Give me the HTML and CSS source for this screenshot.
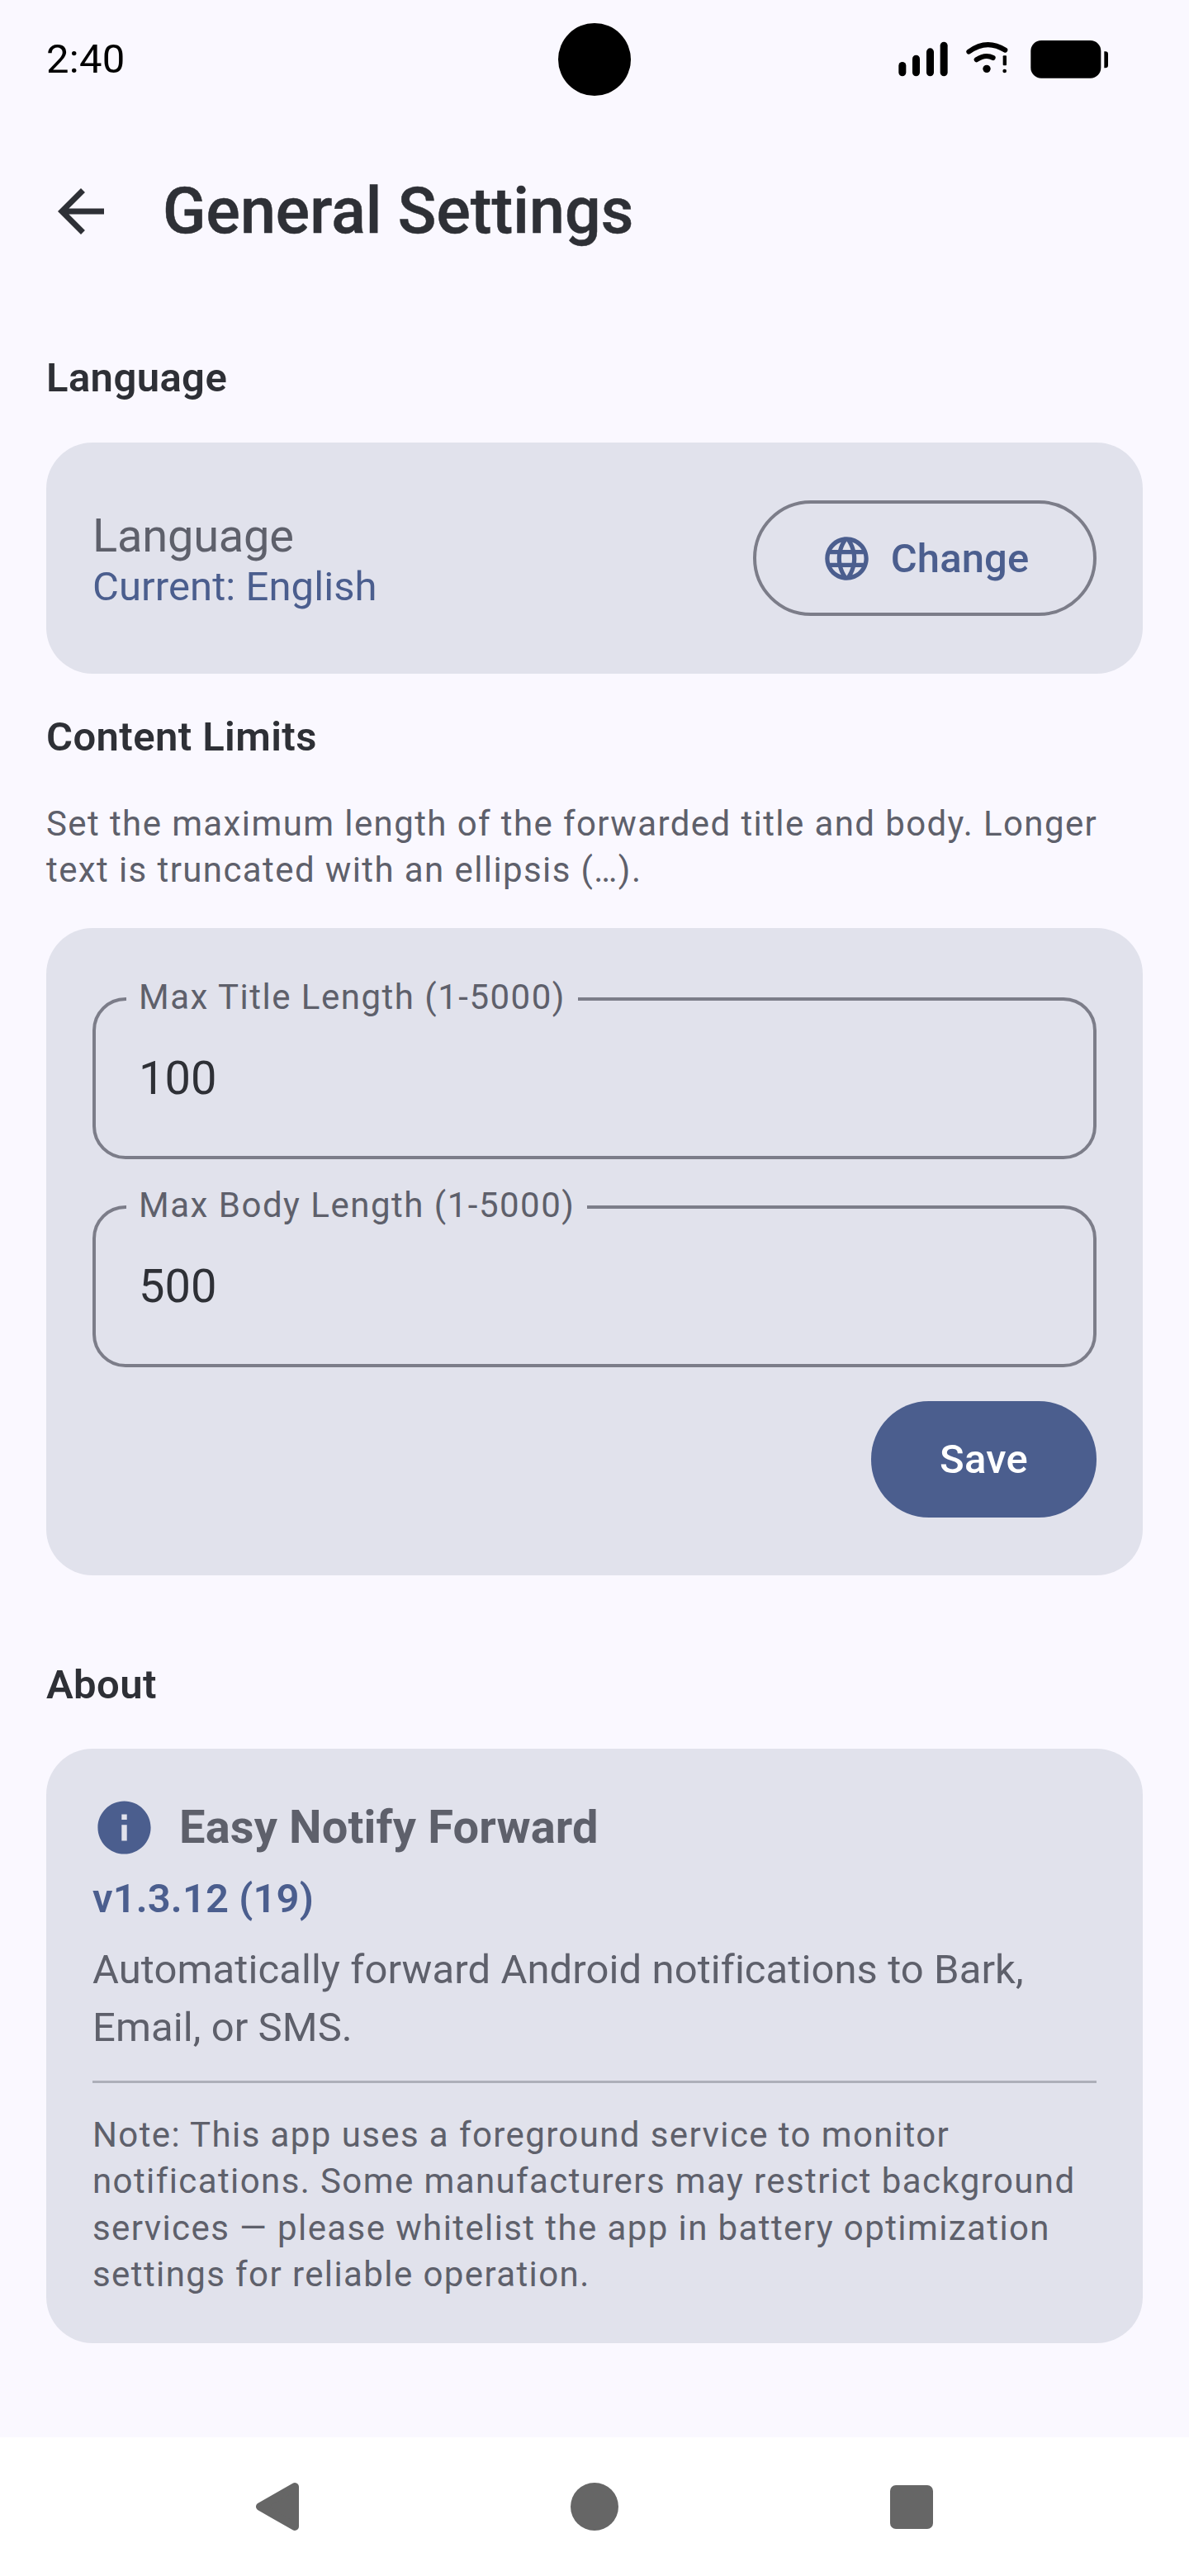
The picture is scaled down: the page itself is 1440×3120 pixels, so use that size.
FILE: index.html
```html
<!DOCTYPE html>
<html lang="en">
<head>
<meta charset="utf-8">
<title>General Settings</title>
<link rel="stylesheet" href="styles.css">
</head>
<body>
<div class="app">
  <div class="status-bar">
    <span class="time">2:40</span>
    <span class="camera"></span>
    <svg class="status-icons" viewBox="0 0 900 240" width="300" height="80">
      <rect x="85" y="135" width="27" height="52" rx="13.5"/>
      <rect x="135" y="110" width="27" height="77" rx="13.5"/>
      <rect x="186" y="85" width="27" height="102" rx="13.5"/>
      <rect x="236" y="62" width="27" height="125" rx="13.5"/>
      <path d="M340 98 Q405 50 472 92" fill="none" stroke="#000" stroke-width="18" stroke-linecap="round"/>
      <path d="M368 127 Q400 105 428 120" fill="none" stroke="#000" stroke-width="18" stroke-linecap="round"/>
      <circle cx="405" cy="160" r="14"/>
      <rect x="464" y="112" width="13" height="36" rx="3"/>
      <circle cx="470" cy="168" r="7"/>
      <rect x="565" y="57" width="255" height="137" rx="38"/>
      <path d="M832 97h4a10 10 0 0 1 10 10v40a10 10 0 0 1-10 10h-4z"/>
    </svg>
  </div>

  <header class="top-bar">
    <svg class="back" viewBox="0 0 24 24" width="84" height="84"><path d="M20 11H7.83l5.59-5.59L12 4l-8 8 8 8 1.41-1.41L7.83 13H20v-2z"/></svg>
    <h1 class="page-title">General Settings</h1>
  </header>

  <main class="content">
    <h2 class="section-title">Language</h2>
    <section class="card card-language">
      <div class="lang-text">
        <div class="lang-label">Language</div>
        <div class="lang-current">Current: English</div>
      </div>
      <button class="btn-outline" type="button">
        <svg viewBox="0 0 24 24" width="63" height="63"><path d="M11.99 2C6.47 2 2 6.48 2 12s4.47 10 9.99 10C17.52 22 22 17.52 22 12S17.52 2 11.99 2zm6.93 6h-2.95c-.32-1.25-.78-2.45-1.38-3.56 1.84.63 3.37 1.91 4.33 3.56zM12 4.04c.83 1.2 1.48 2.53 1.91 3.96h-3.82c.43-1.43 1.08-2.76 1.91-3.96zM4.26 14C4.1 13.36 4 12.69 4 12s.1-1.36.26-2h3.38c-.08.66-.14 1.32-.14 2 0 .68.06 1.34.14 2H4.26zm.82 2h2.95c.32 1.25.78 2.45 1.38 3.56-1.84-.63-3.37-1.9-4.33-3.56zm2.95-8H5.08c.96-1.66 2.49-2.93 4.33-3.56C8.81 5.55 8.35 6.75 8.03 8zM12 19.96c-.83-1.2-1.48-2.53-1.91-3.96h3.82c-.43 1.43-1.08 2.76-1.91 3.96zM14.34 14H9.66c-.09-.66-.16-1.32-.16-2 0-.68.07-1.35.16-2h4.68c.09.65.16 1.32.16 2 0 .68-.07 1.34-.16 2zm.25 5.56c.6-1.11 1.06-2.31 1.38-3.56h2.95c-.96 1.65-2.49 2.93-4.33 3.56zM16.36 14c.08-.66.14-1.32.14-2 0-.68-.06-1.34-.14-2h3.38c.16.64.26 1.31.26 2s-.1 1.36-.26 2h-3.38z"/></svg>
        <span>Change</span>
      </button>
    </section>

    <h2 class="section-title section-limits">Content Limits</h2>
    <p class="limits-desc">Set the maximum length of the forwarded title and body. Longer text is truncated with an ellipsis (…).</p>
    <section class="card card-limits">
      <div class="field">
        <span class="field-label">Max Title Length (1-5000)</span>
        <span class="field-value">100</span>
      </div>
      <div class="field">
        <span class="field-label">Max Body Length (1-5000)</span>
        <span class="field-value">500</span>
      </div>
      <div class="actions"><button class="btn-filled" type="button">Save</button></div>
    </section>

    <h2 class="section-title section-about">About</h2>
    <section class="card card-about">
      <div class="about-head">
        <svg viewBox="0 0 24 24" width="77" height="77"><path d="M12 2C6.48 2 2 6.48 2 12s4.48 10 10 10 10-4.48 10-10S17.52 2 12 2zm1 15h-2v-6h2v6zm0-8h-2V7h2v2z"/></svg>
        <span class="about-name">Easy Notify Forward</span>
      </div>
      <div class="about-version">v1.3.12 (19)</div>
      <p class="about-desc">Automatically forward Android notifications to Bark, Email, or SMS.</p>
      <hr class="divider">
      <p class="about-note">Note: This app uses a foreground service to monitor notifications. Some manufacturers may restrict background services — please whitelist the app in battery optimization settings for reliable operation.</p>
    </section>
  </main>

  <nav class="nav-bar">
    <svg viewBox="0 0 84 84" width="84" height="84"><polygon class="nav-back" points="21,42 63,18 63,66"/></svg>
    <svg viewBox="0 0 84 84" width="84" height="84"><circle cx="42" cy="42" r="29"/></svg>
    <svg viewBox="0 0 84 84" width="84" height="84"><rect x="16" y="16" width="52" height="53" rx="7"/></svg>
  </nav>
</div>
</body>
</html>
```

FILE: styles.css
```css
* { box-sizing: border-box; }
html, body { margin: 0; padding: 0; }
body {
  background: #faf8ff;
  font-family: Roboto, "Noto Sans", sans-serif;
  color: #2e3036;
}
h1, h2, p { margin: 0; font-weight: 400; }
button { font-family: inherit; cursor: pointer; }

.app {
  width: 1440px;
  height: 3120px;
  display: flex;
  flex-direction: column;
}

/* Status bar */
.status-bar {
  position: relative;
  height: 144px;
  flex: none;
  display: flex;
  align-items: center;
  justify-content: space-between;
  padding: 0 80px 0 56px;
}
.time { font-size: 49px; color: #000; line-height: 60px; letter-spacing: 0.3px; }
.camera {
  position: absolute;
  left: 676px;
  top: 28px;
  width: 88px;
  height: 88px;
  border-radius: 50%;
  background: #000;
}
.status-icons { margin-bottom: 4px; fill: #000; }

/* Top bar */
.top-bar {
  flex: none;
  height: 224px;
  display: flex;
  align-items: center;
  gap: 57px;
  padding-left: 56px;
}
.back { fill: #2e3036; }
.page-title { font-size: 77px; font-weight: 500; line-height: 100px; letter-spacing: 0.1px; color: #2e3036; -webkit-text-stroke: 0.5px #2e3036; }

/* Main */
.content {
  flex: 1;
  padding: 55px 56px 0;
}
.section-title {
  font-size: 49px;
  font-weight: 600;
  line-height: 70px;
  letter-spacing: 0.4px;
  color: #2e3036;
}
.section-limits { margin-top: 42px; }
.section-about { margin-top: 98px; }

.card {
  background: #e1e2ec;
  border-radius: 56px;
  padding: 56px;
}
.card-language {
  margin-top: 43px;
  height: 280px;
  display: flex;
  align-items: center;
  justify-content: space-between;
}
.lang-text { padding-top: 5px; }
.lang-label { font-size: 56px; line-height: 64px; letter-spacing: -0.2px; color: #5e606b; }
.lang-current { font-size: 49px; line-height: 60px; letter-spacing: 0.08px; color: #4b5e8e; }

.btn-outline {
  width: 416px;
  height: 140px;
  border: 4px solid #7c7d89;
  border-radius: 70px;
  background: transparent;
  display: flex;
  align-items: center;
  justify-content: center;
  gap: 22px;
  padding: 0;
  font-size: 49px;
  font-weight: 500;
  letter-spacing: 0.1px;
  color: #4b5e8e;
}
.btn-outline svg { fill: #4b5e8e; }

.limits-desc {
  margin-top: 42px;
  font-size: 42px;
  line-height: 56px;
  letter-spacing: 1.4px;
  color: #5e606b;
}

.card-limits {
  margin-top: 42px;
  height: 784px;
  padding-top: 84px;
}
.field {
  position: relative;
  height: 196px;
  border: 4px solid #7c7d89;
  border-radius: 40px;
  display: flex;
  align-items: center;
  padding-left: 52px;
  margin-bottom: 56px;
}
.field + .field { margin-bottom: 41px; }
.field-label {
  position: absolute;
  left: 37px;
  top: -32px;
  padding: 0 15px;
  background: #e1e2ec;
  font-size: 42px;
  line-height: 56px;
  letter-spacing: 1.5px;
  color: #5e606b;
}
.field-value { font-size: 56px; line-height: 70px; color: #2e3036; }
.actions { display: flex; justify-content: flex-end; }
.btn-filled {
  width: 273px;
  height: 141px;
  border: 0;
  border-radius: 70px;
  background: #4b5e8e;
  color: #fff;
  font-size: 49px;
  font-weight: 500;
  letter-spacing: 0.2px;
  padding: 0;
}

.card-about {
  margin-top: 42px;
  height: 720px;
  padding-top: 57px;
}
.about-head { display: flex; align-items: center; gap: 28px; height: 77px; }
.about-head svg { fill: #4b5e8e; }
.about-name { font-size: 56px; font-weight: 700; line-height: 77px; letter-spacing: 0.15px; color: #5e606b; }
.about-version { margin-top: 13px; font-size: 49px; font-weight: 600; line-height: 70px; letter-spacing: 0.1px; color: #4b5e8e; }
.about-desc { margin-top: 16px; font-size: 49px; line-height: 70px; letter-spacing: 0.08px; color: #5e606b; }
.divider { margin: 29px 0 0; height: 3px; border: 0; background: #adafb9; }
.about-note { margin-top: 35px; font-size: 42px; line-height: 56.3px; letter-spacing: 1.4px; color: #5e606b; }

/* Nav */
.nav-bar {
  flex: none;
  height: 168px;
  background: #fff;
  display: flex;
  align-items: center;
  justify-content: center;
  gap: 300px;
  fill: #666;
}
.nav-back { stroke: #666; stroke-width: 10; stroke-linejoin: round; }
```
